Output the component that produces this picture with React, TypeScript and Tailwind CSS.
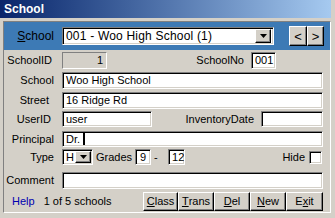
import React from 'react';

const sunken =
  'bg-white border border-t-[#808080] border-l-[#808080] border-b-white border-r-white shadow-[inset_1px_1px_0_#000,inset_-1px_-1px_0_#d4d0c8]';
const raised =
  'bg-[#d4d0c8] border border-t-white border-l-white border-b-[#000] border-r-[#000] shadow-[inset_-1px_-1px_0_#808080]';

function Label({ children, className = '' }: { children: React.ReactNode; className?: string }) {
  return <div className={`w-[50px] shrink-0 text-right ${className}`}>{children}</div>;
}

function Field({ value = '', className = '', children }: { value?: string; className?: string; children?: React.ReactNode }) {
  return (
    <div className={`${sunken} h-full flex items-center px-[3px] whitespace-nowrap overflow-hidden ${className}`}>
      {value}
      {children}
    </div>
  );
}

function DropArrow({ className = '' }: { className?: string }) {
  return (
    <div className={`${raised} flex items-center justify-center ${className}`}>
      <svg width="7" height="4" viewBox="0 0 7 4">
        <path d="M0 0h7L3.5 4z" fill="#000" />
      </svg>
    </div>
  );
}

function Btn({ children, className = '' }: { children: React.ReactNode; className?: string }) {
  return (
    <div className={`${raised} h-full flex items-center justify-center ${className}`}>{children}</div>
  );
}

export default function App() {
  return (
    <div className="w-[335px] h-[218px] bg-[#d4d0c8] overflow-hidden flex flex-col font-['Liberation_Sans',Arial,sans-serif] text-[11px] text-black leading-none">
      <div className="h-[18px] w-[331px] shrink-0 bg-linear-to-r from-[#0a246a] to-[#a6caf0] text-white font-bold text-[12px] pl-[4px] flex items-center">
        School
      </div>

      <div className="pl-[3px] pr-[4px] pt-[3px]">
        <div className="border border-t-[#808080] border-l-[#808080] border-b-white border-r-white pb-[1px]">
          {/* navigator bar */}
          <div className="h-[28px] bg-[#3d7ab5] flex items-center pr-[5px]">
            <Label className="text-[12px]">
              <u>S</u>chool
            </Label>
            <div className={`${sunken} ml-[8px] h-[18px] w-[212px] flex items-center pl-[3px] pr-[2px] text-[12px] tracking-[0.2px]`}>
              <span className="flex-1 whitespace-nowrap">001 - Woo High School (1)</span>
              <DropArrow className="w-[16px] h-[14px]" />
            </div>
            <div className="ml-[15px] h-[20px] flex">
              <Btn className="w-[18px] text-[13px]">&lt;</Btn>
              <Btn className="w-[17px] text-[13px]">&gt;</Btn>
            </div>
          </div>

          <div className="pr-[7px]">
            <div className="mt-[2px] h-[17px] flex items-center">
              <Label className="pr-[2px]">SchoolID</Label>
              <div className="ml-[8px] h-full w-[45px] bg-[#d4d0c8] border border-t-[#808080] border-l-[#808080] border-b-white border-r-white flex items-center justify-end pr-[3px]">
                1
              </div>
              <div className="w-[137px] text-right">SchoolNo</div>
              <Field value="001" className="ml-[7px] w-[25px]" />
            </div>

            <div className="mt-[3px] h-[17px] flex items-center">
              <Label>School</Label>
              <Field value="Woo High School" className="ml-[8px] flex-1" />
            </div>

            <div className="mt-[3px] h-[17px] flex items-center">
              <Label className="pr-[5px]">Street</Label>
              <Field value="16 Ridge Rd" className="ml-[8px] flex-1" />
            </div>

            <div className="mt-[2px] h-[16px] flex items-center">
              <Label className="pr-[3px]">UserID</Label>
              <Field value="user" className="ml-[8px] w-[90px]" />
              <div className="w-[102px] text-right">InventoryDate</div>
              <Field className="ml-[7px] flex-1" />
            </div>

            <div className="mt-[4px] h-[16px] flex items-center">
              <Label>Principal</Label>
              <Field className="ml-[8px] flex-1" value="Dr.">
                <span className="ml-[3px] w-[2px] h-[12px] bg-black" />
              </Field>
            </div>

            <div className="mt-[2px] h-[16px] flex items-center">
              <Label>Type</Label>
              <div className={`${sunken} ml-[8px] h-full w-[31px] flex items-center pl-[3px] pr-[1px]`}>
                <span className="flex-1">H</span>
                <DropArrow className="w-[16px] h-[12px]" />
              </div>
              <div className="ml-[3px]">Grades</div>
              <Field value="9" className="ml-[3px] w-[16px] justify-center" />
              <div className="w-[17px] pl-[3px]">-</div>
              <Field value="12" className="w-[17px] px-[2px]" />
              <div className="ml-auto">Hide</div>
              <div className={`${sunken} ml-[4px] w-[13px] h-[13px] mr-[1px]`} />
            </div>

            <div className="mt-[7px] h-[17px] flex items-center">
              <Label>Comment</Label>
              <Field className="ml-[8px] flex-1" />
            </div>

            <div className="mt-[3px] h-[19px] flex items-center">
              <div className="ml-[8px] text-[#0000b0]">Help</div>
              <div className="ml-[9px]">1 of 5 schools</div>
              <div className="ml-auto h-full flex">
                <Btn className="w-[35px]">
                  <u>C</u>lass
                </Btn>
                <Btn className="w-[36px]">
                  <u>T</u>rans
                </Btn>
                <Btn className="w-[36px]">
                  <u>D</u>el
                </Btn>
                <Btn className="w-[36px]">
                  <u>N</u>ew
                </Btn>
                <Btn className="w-[37px]">
                  E<u>x</u>it
                </Btn>
              </div>
            </div>
          </div>
        </div>
      </div>
    </div>
  );
}
